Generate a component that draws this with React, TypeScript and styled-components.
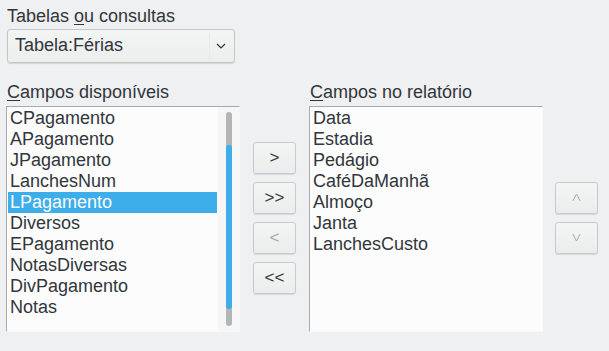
import styled, { createGlobalStyle } from "styled-components";

const GlobalStyle = createGlobalStyle`
    html, body {
        margin: 0;
        padding: 0;
        background: #eff0f1;
    }
    body {
        width: 609px;
        height: 351px;
        overflow: hidden;
        font-family: "Liberation Sans", Arial, sans-serif;
        font-size: 18px;
        line-height: 21px;
        color: #31363b;
    }
`

const Page = styled.div`
    padding: 6px 0 0 6px;
`

const Label = styled.div`
    padding-left: 1px;
    height: 21px;
    white-space: nowrap;

    u {
        text-decoration: underline;
        text-underline-offset: 2px;
    }
`

const Combo = styled.div`
    margin: 2px 0 0 1px;
    width: 228px;
    height: 34px;
    box-sizing: border-box;
    display: flex;
    align-items: center;
    border: 1px solid #c4c6c8;
    border-radius: 3px;
    background: linear-gradient(#f3f4f4, #eceded);
    box-shadow: 0 1px 1px rgba(0, 0, 0, 0.12);
`

const ComboText = styled.span`
    flex: 1;
    padding-left: 7px;
    padding-bottom: 2px;
`

const ComboArrow = styled.span`
    width: 22px;
    height: 26px;
    display: flex;
    align-items: center;
    justify-content: center;
    border-left: 1px solid #e8e9ea;
    margin-right: 2px;
`

const Columns = styled.div`
    display: flex;
    margin-top: 19px;
`

const Column = styled.div`
    display: flex;
    flex-direction: column;
`

const ListBox = styled.div`
    margin-top: 3px;
    width: 234px;
    height: 226px;
    box-sizing: border-box;
    border: 1px solid #f8f8f8;
    border-top-color: #a8aaac;
    border-left-color: #a8aaac;
    background: #fcfcfc;
    display: flex;
`

const Items = styled.div`
    flex: 1;
    padding: 1px;
`

const Item = styled.div<{ $selected?: boolean }>`
    height: 21px;
    padding-left: 2px;
    white-space: nowrap;
    background: ${(p) => (p.$selected ? "#3daee9" : "transparent")};
    color: ${(p) => (p.$selected ? "#fcfcfc" : "#31363b")};
`

const ScrollArea = styled.div`
    width: 21px;
    background: #f6f6f6;
    display: flex;
    justify-content: center;
    padding: 5px 0 5px;
    box-sizing: border-box;
`

const Track = styled.div`
    width: 6px;
    border-radius: 3px;
    background: #b4b5b6;
    padding: 33px 0 17px;
    box-sizing: border-box;
`

const Thumb = styled.div`
    height: 100%;
    border-radius: 3px;
    background: #3daee9;
`

const ButtonColumn = styled.div<{ $top: number; $left: number; $right: number }>`
    display: flex;
    flex-direction: column;
    gap: 8px;
    padding-top: ${(p) => p.$top}px;
    margin: 0 ${(p) => p.$right}px 0 ${(p) => p.$left}px;
`

const Button = styled.div<{ $disabled?: boolean }>`
    width: 43px;
    height: 32px;
    box-sizing: border-box;
    display: flex;
    align-items: center;
    justify-content: center;
    border: 1px solid #c8cacb;
    border-radius: 3px;
    background: linear-gradient(#f3f4f4, #ebecec);
    box-shadow: 0 1px 1px rgba(0, 0, 0, 0.1);
    font-size: 17px;
    color: ${(p) => (p.$disabled ? "#a6a8aa" : "#31363b")};
    padding-bottom: 2px;
`

const Chevron = ({ up }: { up?: boolean }) => (
    <svg width="9" height="9" viewBox="0 0 9 9">
        <path
            d={up ? "M0.8 8L4.5 1L8.2 8" : "M0.8 1L4.5 8L8.2 1"}
            fill="none"
            stroke="#a6a8aa"
            strokeWidth="1"
        />
    </svg>
)

const available = [
    "CPagamento",
    "APagamento",
    "JPagamento",
    "LanchesNum",
    "LPagamento",
    "Diversos",
    "EPagamento",
    "NotasDiversas",
    "DivPagamento",
    "Notas",
]

const chosen = ["Data", "Estadia", "Pedágio", "CaféDaManhã", "Almoço", "Janta", "LanchesCusto"]

const App = () => {
    return (
        <>
            <GlobalStyle />
            <Page>
                <Label>Tabelas <u>o</u>u consultas</Label>
                <Combo>
                    <ComboText>Tabela:Férias</ComboText>
                    <ComboArrow>
                        <svg width="10" height="6" viewBox="0 0 10 6">
                            <path d="M1 1l4 4 4-4" fill="none" stroke="#31363b" strokeWidth="1.2" />
                        </svg>
                    </ComboArrow>
                </Combo>
                <Columns>
                    <Column>
                        <Label><u>C</u>ampos disponíveis</Label>
                        <ListBox>
                            <Items>
                                {available.map((name) => (
                                    <Item key={name} $selected={name === "LPagamento"}>{name}</Item>
                                ))}
                            </Items>
                            <ScrollArea>
                                <Track>
                                    <Thumb />
                                </Track>
                            </ScrollArea>
                        </ListBox>
                    </Column>
                    <ButtonColumn $top={60} $left={13} $right={13}>
                        <Button>&gt;</Button>
                        <Button>&gt;&gt;</Button>
                        <Button $disabled>&lt;</Button>
                        <Button>&lt;&lt;</Button>
                    </ButtonColumn>
                    <Column>
                        <Label><u>C</u>ampos no relatório</Label>
                        <ListBox>
                            <Items>
                                {chosen.map((name) => (
                                    <Item key={name}>{name}</Item>
                                ))}
                            </Items>
                        </ListBox>
                    </Column>
                    <ButtonColumn $top={100} $left={12} $right={0}>
                        <Button $disabled><Chevron up /></Button>
                        <Button $disabled><Chevron /></Button>
                    </ButtonColumn>
                </Columns>
            </Page>
        </>
    )
}

export default App;
